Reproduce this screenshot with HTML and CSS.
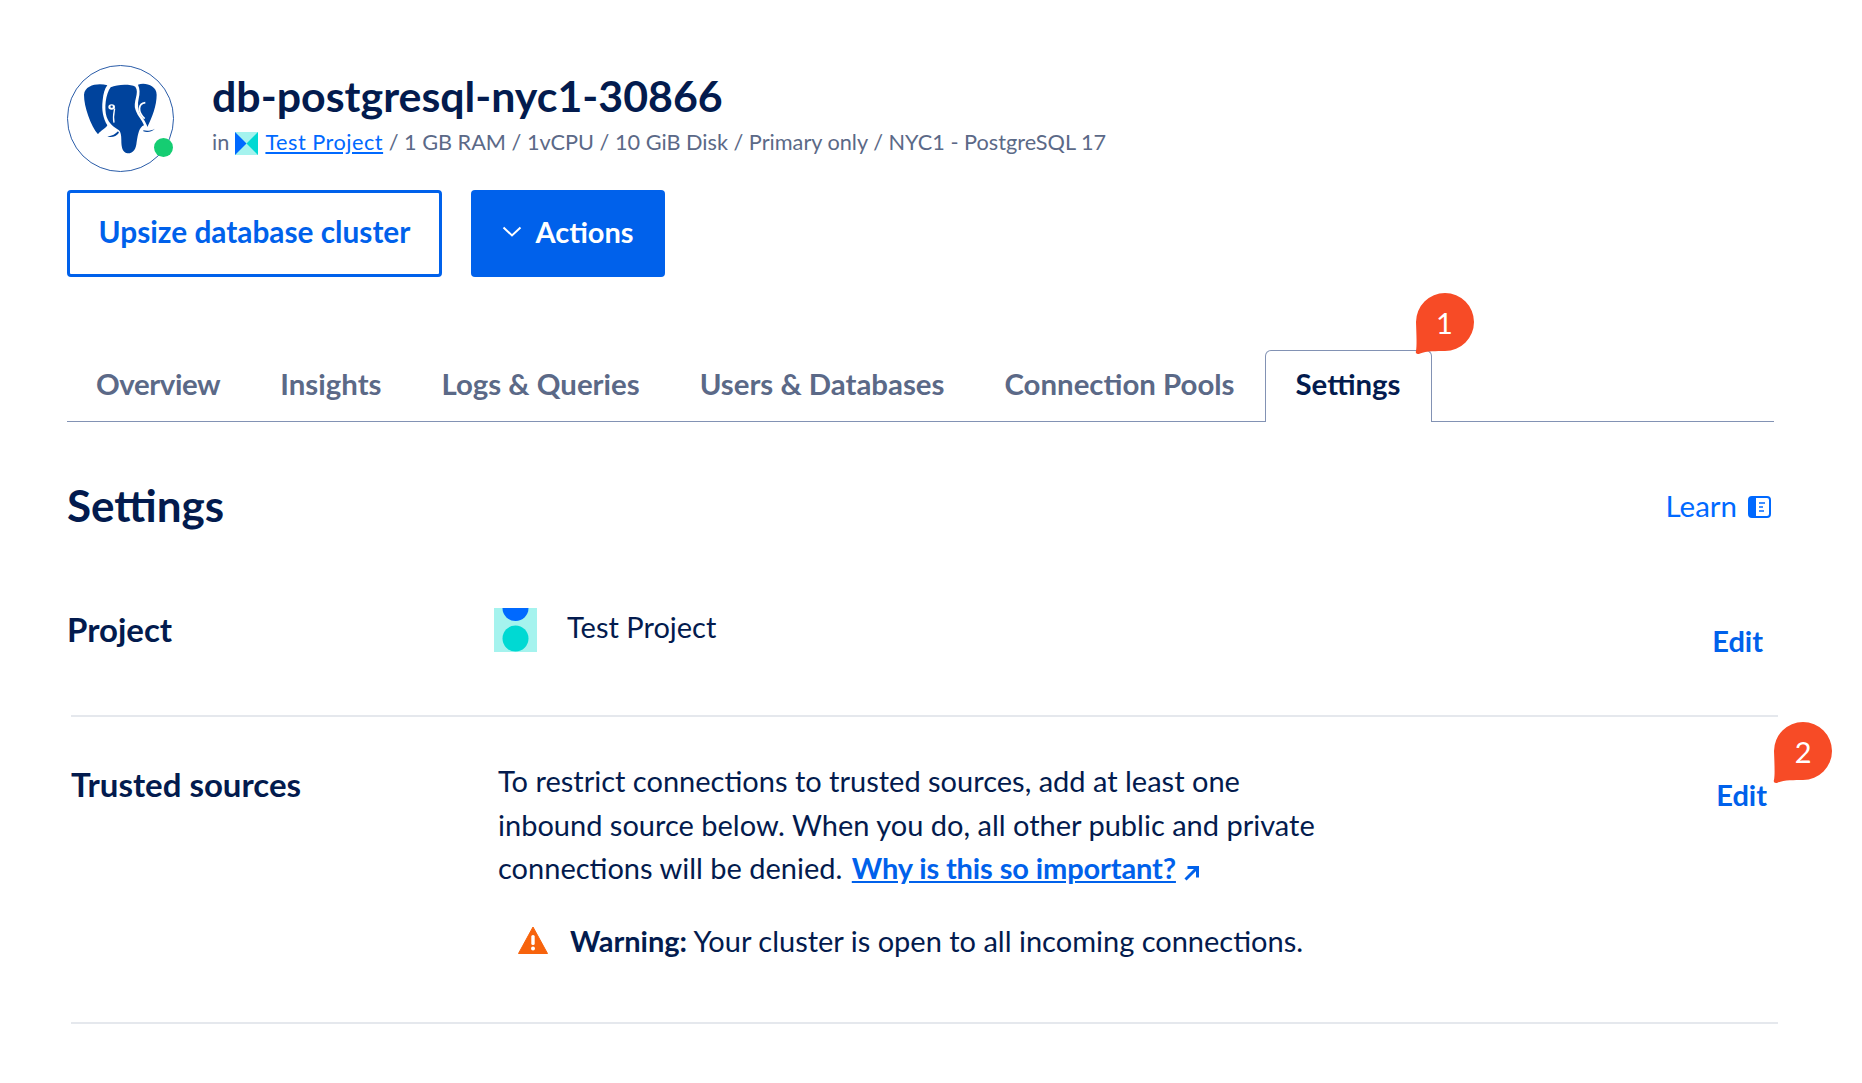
FILE: index.html
```html
<!DOCTYPE html>
<html lang="en">
<head>
  <meta charset="UTF-8" />
  <title>db-postgresql-nyc1-30866</title>
  <link rel="stylesheet" href="styles.css">
</head>
<body>

  <!-- ===== Header ===== -->
  <header class="db-header">
    <div class="avatar">
      <svg width="107" height="107" viewBox="0 0 107 107">
        <circle cx="53.5" cy="53.5" r="53" fill="#fff" stroke="#2a5ca8" stroke-width="1"/>
        <g transform="scale(.3333) translate(-9 -9)" fill="#00439c">
          <path d="M130 70C105 62 62 68 60 98C60 135 80 190 102 217C110 205 125 200 130 190C118 170 112 145 116 115C118 95 122 80 130 70Z"/>
          <path d="M140 76C160 66 200 66 214 74C228 92 205 120 215 145C222 165 235 175 240 190C226 195 222 215 218 240C216 262 208 275 190 274C175 272 172 255 172 235C172 220 170 210 165 205C150 195 135 185 128 165C120 140 125 95 140 76Z"/>
          <path d="M222 68C240 60 278 68 278 98C278 130 265 165 250 195C248 185 238 170 230 160C222 145 220 125 224 110C228 95 228 80 222 68Z"/>
          <path d="M130 224C145 222 155 216 162 208L165 212C158 222 145 228 130 224Z"/>
          <path d="M238 205C250 208 262 206 273 200C262 210 250 212 238 208Z"/>
          <ellipse cx="143" cy="135" rx="10" ry="8" fill="#fff"/>
          <circle cx="143" cy="134" r="3.500"/>
          <path d="M152 140C150 152 146 165 150 182" fill="none" stroke="#fff" stroke-width="4"/>
          <path d="M244 122C222 125 220 150 242 170" fill="none" stroke="#fff" stroke-width="5"/>
        </g>
      </svg>
      <span class="status-dot"></span>
    </div>
    <div class="db-info">
      <h1>db-postgresql-nyc1-30866</h1>
      <p class="db-meta">in
        <svg class="project-mini" width="23" height="23" viewBox="0 0 23 23">
          <rect width="23" height="23" fill="#a5f3ee"/>
          <path d="M0 0L11.5 11.5L0 23Z" fill="#0069ff"/>
          <path d="M23 0L11.5 11.5L23 23Z" fill="#00d9d3"/>
        </svg>
        <a href="#">Test Project</a> / 1 GB RAM / 1vCPU / 10 GiB Disk / Primary only / NYC1 - PostgreSQL 17
      </p>
    </div>
  </header>

  <!-- ===== Buttons ===== -->
  <div class="btn-row">
    <a href="#" class="btn btn-outline">Upsize database cluster</a>
    <a href="#" class="btn btn-solid">
      <svg width="20" height="12" viewBox="0 0 20 12"><path d="M1.5 1.5L10 9.5L18.5 1.5" fill="none" stroke="#fff" stroke-width="2"/></svg>
      Actions
    </a>
  </div>

  <!-- ===== Tabs ===== -->
  <nav class="tabs">
    <a href="#" class="tab-first">Overview</a>
    <a href="#">Insights</a>
    <a href="#">Logs &amp; Queries</a>
    <a href="#">Users &amp; Databases</a>
    <a href="#">Connection Pools</a>
    <a href="#" class="active">Settings
      <span class="badge">
        <svg width="60" height="62" viewBox="0 0 60 62"><path fill="#f74b26" d="M31 0A29 29 0 0 1 31 58C23 58 12 58 6 60.500C3 62 1 60 2 58C3 53 2.500 43 2 29A29 29 0 0 1 31 0Z"/></svg>
        <b>1</b>
      </span>
    </a>
  </nav>

  <!-- ===== Settings ===== -->
  <div class="settings-head">
    <h2>Settings</h2>
    <a href="#" class="learn">Learn
      <svg width="23" height="22" viewBox="0 0 23 22">
        <rect x="1" y="1" width="21" height="20" rx="3" fill="#fff" stroke="#0069ff" stroke-width="2"/>
        <path d="M1 4a3 3 0 0 1 3-3h4v20H4a3 3 0 0 1-3-3Z" fill="#0069ff"/>
        <path d="M11 7h6M11 11h4M11 15h5" stroke="#0069ff" stroke-width="1.6"/>
      </svg>
    </a>
  </div>

  <section class="row row-project">
    <h3>Project</h3>
    <div class="row-body project-name">
      <svg width="43" height="44" viewBox="0 0 43 44">
        <rect width="43" height="44" fill="#a5f3ee"/>
        <path d="M8.500 0A13 13 0 0 0 34.500 0Z" fill="#0069ff"/>
        <circle cx="21.500" cy="30.500" r="13" fill="#00d9d3"/>
      </svg>
      <span>Test Project</span>
    </div>
    <a href="#" class="edit">Edit</a>
  </section>

  <section class="row row-sources">
    <h3>Trusted sources</h3>
    <div class="row-body">
      <p>To restrict connections to trusted sources, add at least one inbound source below. When you do, all other public and private connections will be denied. <a href="#">Why is this so important?</a>
        <svg class="ext" width="16" height="16" viewBox="0 0 16 16"><path d="M1.500 14.500L13 3M3.500 2.500H13.500V12.500" fill="none" stroke="#0061eb" stroke-width="3"/></svg>
      </p>
      <div class="warning">
        <svg width="30" height="28" viewBox="0 0 30 28">
          <path d="M15 1L29.500 27.500H.5Z" fill="#f7630c" stroke="#f7630c" stroke-linejoin="round"/>
          <rect x="13.300" y="9" width="3.400" height="10" rx="1.500" fill="#fff"/>
          <circle cx="15" cy="22.500" r="2" fill="#fff"/>
        </svg>
        <span><strong>Warning:</strong> Your cluster is open to all incoming connections.</span>
      </div>
    </div>
    <a href="#" class="edit">Edit
      <span class="badge">
        <svg width="60" height="62" viewBox="0 0 60 62"><path fill="#f74b26" d="M31 0A29 29 0 0 1 31 58C23 58 12 58 6 60.500C3 62 1 60 2 58C3 53 2.500 43 2 29A29 29 0 0 1 31 0Z"/></svg>
        <b>2</b>
      </span>
    </a>
  </section>

</body>
</html>
```

FILE: styles.css
```css
body {
  font-family: 'Lato', 'Open Sans', sans-serif;
  margin: 0;
  padding: 65px 88px 0 67px;
  background: #fff;
  color: #031b4e;
}

a { text-decoration: none; color: #0061eb; }

/* ===== Header ===== */
.db-header { display: flex; align-items: flex-start; gap: 38px; }
.avatar { position: relative; width: 107px; height: 107px; }
.avatar svg { display: block; }
.status-dot {
  position: absolute;
  left: 87px;
  top: 73px;
  width: 19px;
  height: 19px;
  border-radius: 50%;
  background: #15cd72;
}
.db-info h1 {
  margin: 5px 0 0;
  font-size: 42.900px;
  line-height: 52px;
  font-weight: 700;
}
.db-meta {
  margin: 5px 0 0;
  font-size: 21.700px;
  line-height: 30px;
  color: #5b6987;
}
.db-meta a { color: #0069ff; text-decoration: underline; letter-spacing: .5px; }
.project-mini { vertical-align: -5px; margin: 0 2px 0 0; }

/* ===== Buttons ===== */
.btn-row { display: flex; gap: 29px; margin-top: 18px; }
.btn {
  box-sizing: border-box;
  height: 87px;
  padding-bottom: 4px;
  display: flex;
  align-items: center;
  border-radius: 4px;
  font-size: 29px;
  font-weight: 700;
}
.btn-outline {
  width: 375px;
  justify-content: center;
  border: 3px solid #0061eb;
  background: #fff;
  font-size: 29.800px;
}
.btn-solid {
  width: 194px;
  justify-content: center;
  gap: 13px;
  background: #0061eb;
  color: #fff;
}

/* ===== Tabs ===== */
.tabs {
  display: flex;
  margin-top: 73px;
  height: 71px;
  border-bottom: 1px solid #8292b4;
}
.tabs a {
  position: relative;
  box-sizing: border-box;
  height: 72px;
  padding: 0 29px 7px;
  border: 1px solid transparent;
  border-bottom: 0;
  display: flex;
  align-items: center;
  font-size: 29.400px;
  font-weight: 700;
  color: #5b6987;
}
.tabs a.tab-first { letter-spacing: -.4px; padding-left: 28px; }
.tabs a.active {
  color: #031b4e;
  border-color: #8292b4;
  border-radius: 6px 6px 0 0;
  background: #fff;
  padding: 0 30px 7px;
}

/* ===== Numbered callouts ===== */
.badge { position: absolute; width: 60px; height: 62px; }
.tabs .badge { left: 148px; top: -58px; }
.edit .badge { left: 56px; top: -55px; }
.badge svg { display: block; }
.badge b {
  position: absolute;
  left: 2px;
  top: 0;
  width: 58px;
  height: 58px;
  display: flex;
  align-items: center;
  justify-content: center;
  color: #fff;
  font-size: 29px;
  font-weight: 400;
}

/* ===== Settings ===== */
.settings-head {
  display: flex;
  justify-content: space-between;
  align-items: center;
  margin-top: 55px;
  height: 56px;
}
.settings-head h2 { margin: 0; font-size: 44px; font-weight: 700; }
.learn { display: flex; align-items: center; gap: 11px; font-size: 29.500px; color: #0069ff; padding-right: 3px; }
.learn svg { margin-top: 4px; }

.row { display: grid; grid-template-columns: 427px 1fr auto; align-items: start; }
.row h3 { margin: 0; font-size: 33px; line-height: 38px; font-weight: 700; }
.row-project { padding: 75px 11px 0 0; height: 182px; box-sizing: border-box; }
.row-project h3 { padding-top: 2px; }
.project-name { display: flex; gap: 30px; font-size: 29px; }
.project-name span { margin-top: 1px; }
.row-project .edit { margin-top: 15px; }
.edit { position: relative; font-size: 29px; font-weight: 700; }

.row-sources {
  margin: 0 -4px 0 4px;
  padding: 42px 11px 0 0;
  height: 309px;
  box-sizing: border-box;
  border-top: 2px solid #e5e8ed;
  border-bottom: 2px solid #e5e8ed;
}
.row-sources h3 { padding-top: 6px; }
.row-sources .edit { margin-top: 18px; }
.row-sources p {
  margin: 0;
  width: 830px;
  font-size: 29px;
  line-height: 43.500px;
}
.row-sources p a { color: #0061eb; font-weight: 700; letter-spacing: -0.12px; text-decoration: underline; margin-left: 2px; }
.ext { margin-left: 1px; vertical-align: -2px; }
.warning { display: flex; align-items: center; gap: 22px; margin: 33px 0 0 20px; font-size: 29px; }
```
